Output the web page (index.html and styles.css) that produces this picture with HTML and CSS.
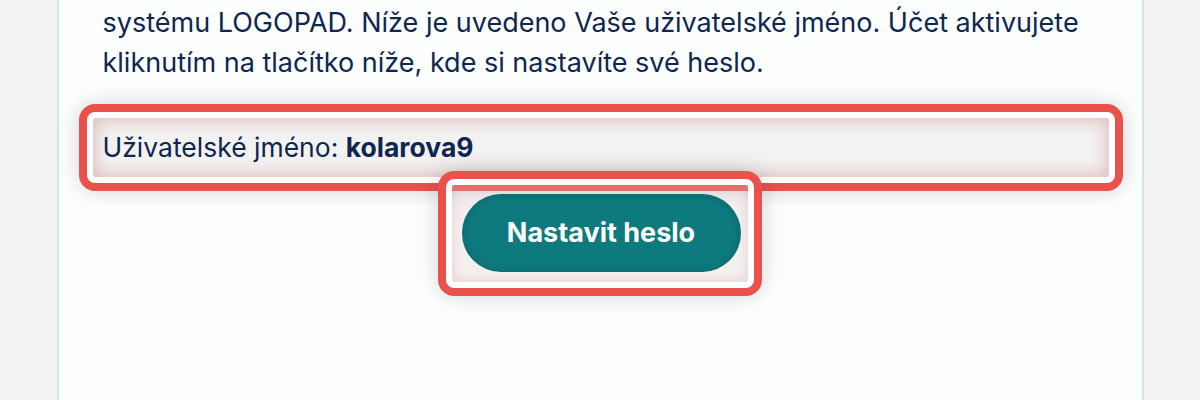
FILE: index.html
```html
<!DOCTYPE html>
<html lang="cs">
<head>
<meta charset="utf-8">
<title>LOGOPAD – aktivace účtu</title>
<link rel="stylesheet" href="styles.css">
</head>
<body>
<div class="page">
  <div class="card">
    <p class="intro">systému LOGOPAD. Níže je uvedeno Vaše uživatelské jméno. Účet aktivujete<br>kliknutím na tlačítko níže, kde si nastavíte své heslo.</p>
    <div class="mark mark-user">
      <div class="userline">Uživatelské jméno:&nbsp;<strong>kolarova9</strong></div>
    </div>
    <div class="btn-row">
      <div class="mark mark-btn">
        <a class="btn" href="#">Nastavit heslo</a>
      </div>
    </div>
  </div>
</div>
</body>
</html>
```
FILE: styles.css
```css
html, body {
  margin: 0;
  height: 400px;
  overflow: hidden;
  background: #f2f2f2;
}

.page {
  display: flex;
  justify-content: center;
  height: 400px;
}

.card {
  width: 1083px;
  background: #fdfefe;
  border-left: 2px solid #d5e7e4;
  border-right: 2px solid #d5e7e4;
  padding-top: 3px;
  font-family: Inter, "Noto Sans", sans-serif;
  color: #0e2650;
}

.intro {
  margin: 0 40px 0 44px;
  font-size: 27px;
  line-height: 40px;
  white-space: nowrap;
}

.mark {
  border: 8px solid #e8524a;
  border-radius: 16px;
}

.mark-user {
  margin: 21px 19px 0 20px;
  padding: 6px;
  background: #fff;
  box-shadow: 0 0 22px rgba(0, 0, 0, 0.17);
}

.userline {
  height: 59px;
  display: flex;
  align-items: center;
  padding: 0 10px 1px;
  box-sizing: border-box;
  font-size: 26.5px;
  background: #f3f2f2;
  border-radius: 3px;
  box-shadow: inset 0 0 16px 3px rgba(195, 120, 120, 0.42);
}

.userline strong {
  font-weight: 700;
}

.btn-row {
  display: flex;
  justify-content: center;
  margin-top: -20px;
}

.mark-btn {
  width: 324px;
  height: 125px;
  box-sizing: border-box;
  padding: 15px 0;
  display: flex;
  justify-content: center;
  background: rgba(225, 200, 200, 0.25);
  box-shadow: inset 0 0 0 6px #fff, inset 0 0 12px 7px rgba(195, 130, 130, 0.28), 0 0 22px rgba(0, 0, 0, 0.17);
}

.btn {
  width: 279px;
  height: 78px;
  border-radius: 39px;
  display: flex;
  align-items: center;
  justify-content: center;
  padding-bottom: 2px;
  box-sizing: border-box;
  background: #0e7a7e;
  box-shadow: inset 0 0 10px rgba(0, 40, 40, 0.25);
  color: #fff;
  font-size: 27px;
  font-weight: 700;
  text-decoration: none;
  margin-left: 2px;
}
```
